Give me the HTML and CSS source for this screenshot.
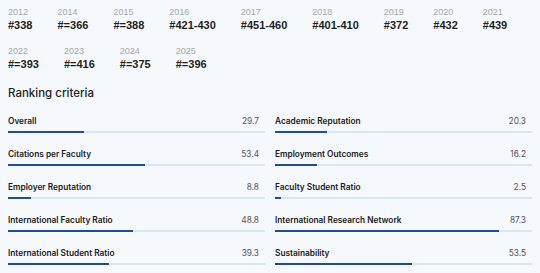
FILE: index.html
```html
<!DOCTYPE html>
<html lang="en">
<head>
    <meta charset="UTF-8">
    <meta name="viewport" content="width=device-width, initial-scale=1.0">
    <title>Rankings</title>
    <link rel="stylesheet" href="styles.css">
</head>
<body>
    <div class="years">
        <div class="year"><span class="year-label">2012</span><span class="year-rank">#338</span></div>
        <div class="year"><span class="year-label">2014</span><span class="year-rank">#=366</span></div>
        <div class="year"><span class="year-label">2015</span><span class="year-rank">#=388</span></div>
        <div class="year"><span class="year-label">2016</span><span class="year-rank">#421-430</span></div>
        <div class="year"><span class="year-label">2017</span><span class="year-rank">#451-460</span></div>
        <div class="year"><span class="year-label">2018</span><span class="year-rank">#401-410</span></div>
        <div class="year"><span class="year-label">2019</span><span class="year-rank">#372</span></div>
        <div class="year"><span class="year-label">2020</span><span class="year-rank">#432</span></div>
        <div class="year"><span class="year-label">2021</span><span class="year-rank">#439</span></div>
        <div class="year"><span class="year-label">2022</span><span class="year-rank">#=393</span></div>
        <div class="year"><span class="year-label">2023</span><span class="year-rank">#=416</span></div>
        <div class="year"><span class="year-label">2024</span><span class="year-rank">#=375</span></div>
        <div class="year"><span class="year-label">2025</span><span class="year-rank">#=396</span></div>
    </div>

    <h3 class="criteria-title">Ranking criteria</h3>

    <div class="criteria">
        <div class="criterion">
            <div class="criterion-head"><span>Overall</span><span class="score">29.7</span></div>
            <div class="bar"><div class="fill" style="width: 29.7%"></div></div>
        </div>
        <div class="criterion">
            <div class="criterion-head"><span>Academic Reputation</span><span class="score">20.3</span></div>
            <div class="bar"><div class="fill" style="width: 20.3%"></div></div>
        </div>
        <div class="criterion">
            <div class="criterion-head"><span>Citations per Faculty</span><span class="score">53.4</span></div>
            <div class="bar"><div class="fill" style="width: 53.4%"></div></div>
        </div>
        <div class="criterion">
            <div class="criterion-head"><span>Employment Outcomes</span><span class="score">16.2</span></div>
            <div class="bar"><div class="fill" style="width: 16.2%"></div></div>
        </div>
        <div class="criterion">
            <div class="criterion-head"><span>Employer Reputation</span><span class="score">8.8</span></div>
            <div class="bar"><div class="fill" style="width: 8.8%"></div></div>
        </div>
        <div class="criterion">
            <div class="criterion-head"><span>Faculty Student Ratio</span><span class="score">2.5</span></div>
            <div class="bar"><div class="fill" style="width: 2.5%"></div></div>
        </div>
        <div class="criterion">
            <div class="criterion-head"><span>International Faculty Ratio</span><span class="score">48.8</span></div>
            <div class="bar"><div class="fill" style="width: 48.8%"></div></div>
        </div>
        <div class="criterion">
            <div class="criterion-head"><span>International Research Network</span><span class="score">87.3</span></div>
            <div class="bar"><div class="fill" style="width: 87.3%"></div></div>
        </div>
        <div class="criterion">
            <div class="criterion-head"><span>International Student Ratio</span><span class="score">39.3</span></div>
            <div class="bar"><div class="fill" style="width: 39.3%"></div></div>
        </div>
        <div class="criterion">
            <div class="criterion-head"><span>Sustainability</span><span class="score">53.5</span></div>
            <div class="bar"><div class="fill" style="width: 53.5%"></div></div>
        </div>
    </div>
</body>
</html>
```

FILE: styles.css
```css
body {
    margin: 0;
    padding: 7px 8px 0;
    background-color: #f5f8fd;
    font-family: "Inter", "Liberation Sans", sans-serif;
    color: #222;
}

.years {
    display: flex;
    flex-wrap: wrap;
    column-gap: 25px;
    row-gap: 15px;
    font-family: "Liberation Sans", sans-serif;
}

.year {
    display: flex;
    flex-direction: column;
}

.year-label {
    font-size: 9px;
    line-height: 10px;
    color: #a8a8a8;
    margin-bottom: 2px;
}

.year-rank {
    font-size: 11px;
    line-height: 12px;
    font-weight: 700;
    color: #1f1f1f;
}

.criteria-title {
    margin: 17px 0 16px;
    font-size: 11.5px;
    line-height: 12px;
    font-weight: 500;
}

.criteria {
    display: grid;
    grid-template-columns: 1fr 1fr;
    column-gap: 10px;
    row-gap: 15px;
}

.criterion-head {
    display: flex;
    justify-content: space-between;
    font-size: 8.3px;
    line-height: 12px;
    font-weight: 600;
    color: #222;
    padding-right: 6px;
}

.score {
    font-weight: 400;
    color: #555;
}

.bar {
    margin-top: 4px;
    height: 2px;
    background-color: #d7e5f8;
}

.fill {
    height: 100%;
    background-color: #1f4d9e;
}
```
